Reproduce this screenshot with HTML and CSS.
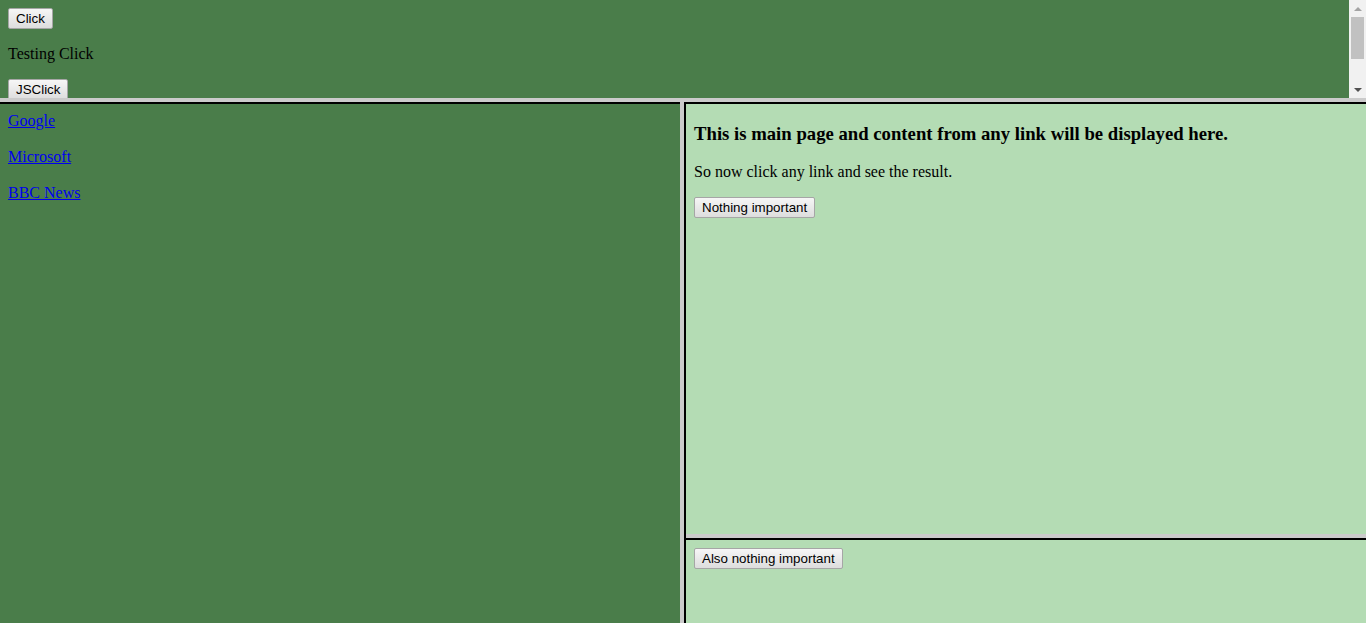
FILE: index.html
```html
<!DOCTYPE html>
<html>
<head>
<meta charset="utf-8">
<title>Frames</title>
<link rel="stylesheet" href="styles.css">
</head>
<body>
<div class="top">
  <div class="top-content">
    <button class="btn">Click</button>
    <p class="para">Testing Click</p>
    <button class="btn">JSClick</button>
  </div>
  <div class="scrollbar">
    <div class="arrow arrow-up"></div>
    <div class="track"><div class="thumb"></div></div>
    <div class="arrow arrow-down"></div>
  </div>
</div>
<div class="hsep"></div>
<div class="bottom">
  <div class="left">
    <a class="link" href="#">Google</a><br><br>
    <a class="link" href="#">Microsoft</a><br><br>
    <a class="link" href="#">BBC News</a>
  </div>
  <div class="vsep"></div>
  <div class="right">
    <div class="main">
      <h3 class="heading">This is main page and content from any link will be displayed here.</h3>
      <p class="para">So now click any link and see the result.</p>
      <button class="btn">Nothing important</button>
    </div>
    <div class="hsep"></div>
    <div class="lower">
      <button class="btn">Also nothing important</button>
    </div>
  </div>
</div>
</body>
</html>
```
FILE: styles.css
```css
html, body {
  margin: 0;
  padding: 0;
  height: 623px;
  overflow: hidden;
  font-family: "Liberation Serif", "Times New Roman", serif;
  font-size: 16px;
  color: #000;
}
.top {
  display: flex;
  height: 98px;
}
.top-content {
  flex: 1;
  background: #4a7d4a;
  padding: 8px;
  overflow: hidden;
}
.scrollbar {
  width: 17px;
  background: #f1f1f1;
  display: flex;
  flex-direction: column;
}
.arrow {
  height: 17px;
  display: flex;
  align-items: center;
  justify-content: center;
}
.arrow-up::before {
  content: "";
  border-left: 4px solid transparent;
  border-right: 4px solid transparent;
  border-bottom: 4px solid #a3a3a3;
}
.arrow-down::before {
  content: "";
  border-left: 4px solid transparent;
  border-right: 4px solid transparent;
  border-top: 4px solid #505050;
}
.track {
  flex: 1;
  padding: 0 2px;
}
.thumb {
  height: 42px;
  background: #c1c1c1;
}
.para {
  margin: 16px 0;
}
.heading {
  font-size: 18.72px;
  font-weight: bold;
  margin: 10.72px 0 18.72px;
}
.btn {
  font-family: "Liberation Sans", Arial, sans-serif;
  font-size: 13.33px;
  line-height: 15px;
  color: #000;
  background: linear-gradient(#f6f6f6, #dddddd);
  border: 1px solid #a6a6a6;
  border-radius: 2px;
  padding: 2px 7px;
  margin: 0;
}
.hsep {
  height: 4px;
  background: #cbcbcb;
  flex: none;
}
.bottom {
  display: flex;
  height: 521px;
}
.left {
  width: 680px;
  background: #4a7d4a;
  border-top: 2px solid #000;
  padding: 8px;
  box-sizing: border-box;
  line-height: 18px;
}
.link {
  color: #0000ee;
  text-decoration: underline;
}
.vsep {
  width: 4px;
  background: #cbcbcb;
}
.right {
  flex: 1;
  display: flex;
  flex-direction: column;
  border-left: 2px solid #000;
}
.main {
  height: 432px;
  box-sizing: border-box;
  background: #b4dcb4;
  border-top: 2px solid #000;
  padding: 8px;
}
.lower {
  flex: 1;
  background: #b4dcb4;
  border-top: 2px solid #000;
  padding: 8px;
}
```
